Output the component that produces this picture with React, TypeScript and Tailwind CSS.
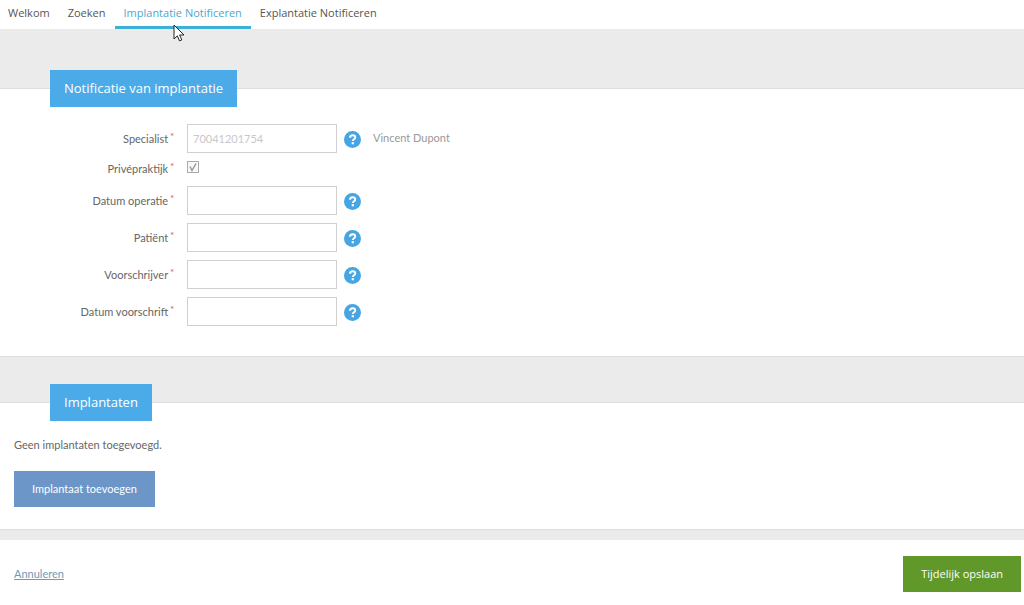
import type { ReactNode } from 'react';

interface Field {
    id: string;
    label: string;
    value?: string;
    note?: string;
}

const TABS = ['Welkom', 'Zoeken', 'Implantatie Notificeren', 'Explantatie Notificeren'];
const ACTIVE_TAB = 'Implantatie Notificeren';

const SPECIALIST: Field = { id: 'specialist', label: 'Specialist', value: '70041201754', note: 'Vincent Dupont' };

const FIELDS: Field[] = [
    { id: 'datum-operatie', label: 'Datum operatie' },
    { id: 'patient', label: 'Patiënt' },
    { id: 'voorschrijver', label: 'Voorschrijver' },
    { id: 'datum-voorschrift', label: 'Datum voorschrift' },
];

function FieldLabel({ id, children }: { id: string; children: ReactNode }) {
    return (
        <label htmlFor={id} className="flex w-[174px] shrink-0 justify-end gap-0.5 leading-4 text-[#666]">
            {children}
            <span className="text-[9px] leading-3 text-[#d0524a]">*</span>
        </label>
    );
}

function HelpButton({ label }: { label: string }) {
    return (
        <button type="button" aria-label={`Hulp bij ${label}`} className="ml-[7px] mt-0.5 shrink-0">
            <svg viewBox="0 0 17 17" className="block size-[17px]">
                <circle cx="8.5" cy="8.5" r="8.5" fill="#46a5e2" />
                <path d="M6 6.7C6 5 7.1 4.2 8.6 4.2s2.6.8 2.6 2.2c0 1.9-2.4 1.7-2.4 3.5" fill="none" stroke="#fff" strokeWidth="2" />
                <rect x="7.7" y="11.2" width="2.2" height="2.1" fill="#fff" />
            </svg>
        </button>
    );
}

function TextField({ id, label, value, note }: Field) {
    return (
        <div className="flex items-center">
            <FieldLabel id={id}>{label}</FieldLabel>
            <input
                id={id}
                type="text"
                defaultValue={value}
                disabled={value !== undefined}
                className="ml-[13px] h-[29px] w-[150px] border border-[#d0d0d0] bg-white px-[5px] text-[#555] disabled:text-[#c8c8c8]"
            />
            <HelpButton label={label} />
            {note && <span className="ml-3 text-[#999]">{note}</span>}
        </div>
    );
}

function SectionTitle({ children }: { children: ReactNode }) {
    return (
        <h2 className="-mt-[19px] ml-[50px] w-fit bg-[#4babe9] px-3.5 font-['Open_Sans',sans-serif] text-[13px] leading-[37px] text-white">
            {children}
        </h2>
    );
}

export default function App() {
    return (
        <div className="relative min-h-screen bg-white font-['Lato','Open_Sans',sans-serif] text-[11px]">
            <nav className="-ml-px flex font-['Open_Sans',sans-serif] text-[#555]">
                {TABS.map((tab) => (
                    <a
                        key={tab}
                        href="#"
                        aria-current={tab === ACTIVE_TAB ? 'page' : undefined}
                        className="border-b-3 border-transparent px-[9px] leading-[26px] aria-[current=page]:border-[#3cb0d8] aria-[current=page]:text-[#4da7cb]"
                    >
                        {tab}
                    </a>
                ))}
            </nav>

            <form onSubmit={(e) => e.preventDefault()}>
                <section className="bg-[#ebebeb] pt-[59px]">
                    <div className="border-y border-[#dedede] bg-white pb-[30px]">
                        <SectionTitle>Notificatie van implantatie</SectionTitle>
                        <div className="mt-[17px] flex flex-col gap-2">
                            <TextField {...SPECIALIST} />
                            <div className="flex h-[17px]">
                                <FieldLabel id="privepraktijk">Privépraktijk</FieldLabel>
                                <span className="ml-[13px] grid self-start">
                                    <input
                                        id="privepraktijk"
                                        type="checkbox"
                                        defaultChecked
                                        disabled
                                        className="col-start-1 row-start-1 size-3 appearance-none border border-[#aaa] bg-[#f8f8f8]"
                                    />
                                    <svg viewBox="0 0 12 12" className="pointer-events-none col-start-1 row-start-1 size-3">
                                        <path d="M3 5.5l2 4 4-7" fill="none" stroke="#999" strokeWidth="1.5" />
                                    </svg>
                                </span>
                            </div>
                            {FIELDS.map((field) => (
                                <TextField key={field.id} {...field} />
                            ))}
                        </div>
                    </div>
                </section>

                <section className="bg-[#ebebeb] pt-[45px]">
                    <div className="border-y border-[#dedede] bg-white pb-[22px]">
                        <SectionTitle>Implantaten</SectionTitle>
                        <div className="px-3.5 pt-4">
                            <p className="leading-4 text-[#666]">Geen implantaten toegevoegd.</p>
                            <button type="button" className="mt-[18px] h-9 bg-[#6b96c7] px-[18px] text-white">
                                Implantaat toevoegen
                            </button>
                        </div>
                    </div>
                </section>

                <footer className="flex items-center justify-between border-t-10 border-[#ebebeb] pb-3 pl-3.5 pr-[3px] pt-4">
                    <a href="#" className="text-[#6f9ab8] underline">Annuleren</a>
                    <button type="submit" className="h-9 bg-[#61982a] px-[18px] font-['Open_Sans',sans-serif] text-white">
                        Tijdelijk opslaan
                    </button>
                </footer>
            </form>

            {/* mouse pointer over the active tab */}
            <svg viewBox="0 0 12 18" className="pointer-events-none absolute left-[173px] top-6 h-[18px] w-3">
                <path d="M1 1v14l3.3-3.1 2.2 5 2.3-1-2.2-4.9H11z" fill="#fff" stroke="#222" strokeWidth="1" />
            </svg>
        </div>
    );
}
